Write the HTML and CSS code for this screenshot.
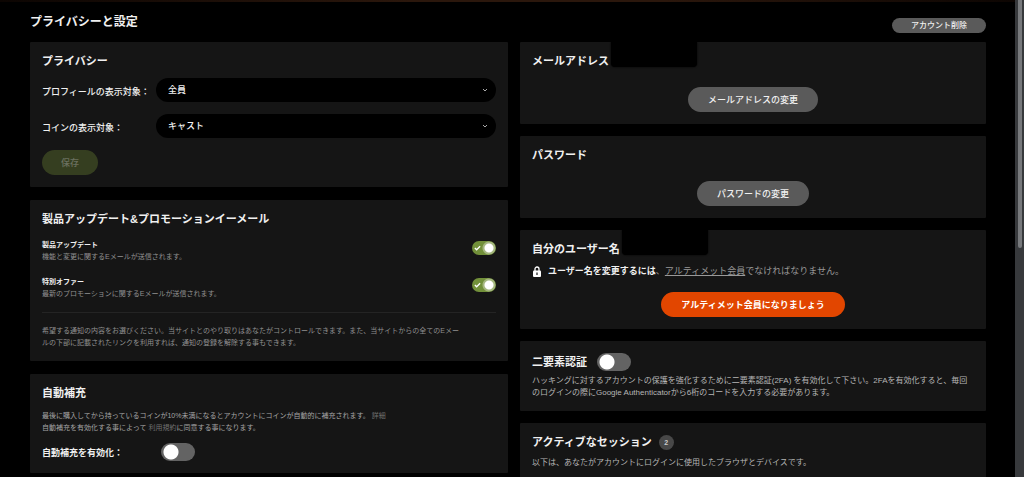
FILE: index.html
```html
<!DOCTYPE html>
<html lang="ja">
<head>
  <meta charset="utf-8">
  <meta name="viewport" content="width=device-width, initial-scale=1">
  <title>プライバシーと設定</title>
  <link rel="stylesheet" href="styles.css">
</head>
<body>
  <div class="page">
    <main class="settings">
      <header class="settings-header">
        <h1 class="page-title">プライバシーと設定</h1>
        <button type="button" class="button button-small">アカウント削除</button>
      </header>

      <div class="columns">
        <!-- Left column -->
        <div class="column column-left">
          <section class="panel">
            <h2 class="panel-title">プライバシー</h2>
            <form class="privacy-form">
              <div class="field">
                <label for="profile-visibility">プロフィールの表示対象：</label>
                <div class="select-wrap">
                  <select id="profile-visibility">
                    <option>全員</option>
                  </select>
                  <svg class="chevron" viewBox="0 0 6 4" fill="none" stroke="currentColor"><path d="M1 1l2 2 2-2"/></svg>
                </div>
              </div>
              <div class="field">
                <label for="coin-visibility">コインの表示対象：</label>
                <div class="select-wrap">
                  <select id="coin-visibility">
                    <option>キャスト</option>
                  </select>
                  <svg class="chevron" viewBox="0 0 6 4" fill="none" stroke="currentColor"><path d="M1 1l2 2 2-2"/></svg>
                </div>
              </div>
              <button type="submit" class="button button-save" disabled>保存</button>
            </form>
          </section>

          <section class="panel">
            <h2 class="panel-title">製品アップデート&amp;プロモーションイーメール</h2>
            <div class="options">
              <div class="option">
                <div class="option-text">
                  <label for="product-updates">製品アップデート</label>
                  <p>機能と変更に関するEメールが送信されます。</p>
                </div>
                <span class="switch-small">
                  <input type="checkbox" id="product-updates" checked>
                  <svg viewBox="0 0 8 6" fill="none" stroke="currentColor" stroke-width="1.5"><path d="M1 3l2 2 4-4"/></svg>
                </span>
              </div>
              <div class="option">
                <div class="option-text">
                  <label for="special-offers">特別オファー</label>
                  <p>最新のプロモーションに関するEメールが送信されます。</p>
                </div>
                <span class="switch-small">
                  <input type="checkbox" id="special-offers" checked>
                  <svg viewBox="0 0 8 6" fill="none" stroke="currentColor" stroke-width="1.5"><path d="M1 3l2 2 4-4"/></svg>
                </span>
              </div>
            </div>
            <p class="note">希望する通知の内容をお選びください。当サイトとのやり取りはあなたがコントロールできます。また、当サイトからの全てのEメー<br>ルの下部に記載されたリンクを利用すれば、通知の登録を解除する事もできます。</p>
          </section>

          <section class="panel">
            <h2 class="panel-title">自動補充</h2>
            <p class="refill-text">最後に購入してから持っているコインが10%未満になるとアカウントにコインが自動的に補充されます。 <a href="#">詳細</a><br>自動補充を有効化する事によって <a href="#">利用規約</a>に同意する事になります。</p>
            <div class="refill-row">
              <label for="auto-refill">自動補充を有効化：</label>
              <input type="checkbox" class="switch" id="auto-refill">
            </div>
          </section>
        </div>

        <!-- Right column -->
        <div class="column">
          <section class="panel">
            <h2 class="panel-title">メールアドレス<span class="hidden-value"></span></h2>
            <button type="button" class="button button-center">メールアドレスの変更</button>
          </section>

          <section class="panel">
            <h2 class="panel-title">パスワード</h2>
            <button type="button" class="button button-center">パスワードの変更</button>
          </section>

          <section class="panel">
            <h2 class="panel-title">自分のユーザー名<span class="hidden-value"></span></h2>
            <p class="username-text">
              <svg class="lock" viewBox="0 0 8 11"><path d="M2 5V3a2 2 0 0 1 4 0v2" fill="none" stroke="#fff" stroke-width="1.3"/><rect y="4.5" width="8" height="6.5" rx="1" fill="#fff"/><path d="M4 6.5v2.5" stroke="#151515" stroke-width="1.2"/></svg>
              <span><strong>ユーザー名を変更するには</strong>、<a href="#">アルティメット会員</a>でなければなりません。</span>
            </p>
            <button type="button" class="button button-center button-ultimate">アルティメット会員になりましょう</button>
          </section>

          <section class="panel">
            <div class="twofa-head">
              <h2 class="panel-title"><label for="two-factor">二要素認証</label></h2>
              <input type="checkbox" class="switch" id="two-factor">
            </div>
            <p class="text">ハッキングに対するアカウントの保護を強化するために二要素認証(2FA) を有効化して下さい。2FAを有効化すると、毎回<br>のログインの際にGoogle Authenticatorから6桁のコードを入力する必要があります。</p>
          </section>

          <section class="panel">
            <h2 class="panel-title sessions-title">アクティブなセッション <span class="badge">2</span></h2>
            <p class="text">以下は、あなたがアカウントにログインに使用したブラウザとデバイスです。</p>
          </section>
        </div>
      </div>
    </main>
    <div class="scrollbar"><div class="scrollbar-thumb"></div></div>
  </div>
</body>
</html>
```

FILE: styles.css
```css
* {
  margin: 0;
  padding: 0;
  box-sizing: border-box;
}

body {
  background: #000;
  color: #f0f0f0;
  font-family: "Liberation Sans", "Noto Sans CJK JP", sans-serif;
  font-size: 9px;
}

button,
select {
  font: inherit;
  color: inherit;
  border: none;
}

a {
  color: inherit;
}

.page {
  display: flex;
  height: 100vh;
  overflow: hidden;
  background: linear-gradient(to right, #0c0502, #2b170c 40%, #2b170c 65%, #0c0502) top / 100% 2px no-repeat;
}

.settings {
  flex: 1;
  padding: 15px 29px 12px 30px;
}

.settings-header {
  display: flex;
  justify-content: space-between;
  align-items: flex-end;
  min-height: 18px;
  margin-bottom: 9px;
}

.page-title {
  align-self: flex-start;
  font-size: 12px;
  line-height: 14px;
}

.columns {
  display: grid;
  grid-template-columns: 478fr 466fr;
  gap: 12px;
}

.column {
  display: flex;
  flex-direction: column;
  gap: 12px;
}

.column-left {
  gap: 13px;
}

.panel {
  position: relative;
  padding: 11px 12px 12px;
  background: #151515;
  border-radius: 1px;
}

.panel-title {
  font-size: 11px;
  line-height: 16px;
}

/* Buttons */
.button {
  height: 25px;
  padding: 0 20px;
  border-radius: 13px;
  background: #5a5a5a;
  font-weight: 500;
  white-space: nowrap;
}

.button-small {
  height: 15px;
  padding: 0 19px;
  font-size: 8px;
  line-height: 15px;
}

.button-center {
  display: block;
  margin: 18px auto 0;
}

.button-save {
  align-self: flex-start;
  padding: 0 19px;
  background: #353e20;
  color: #6b705f;
}

.button-ultimate {
  margin-top: 13px;
  background: #e24600;
  color: #fff;
  font-weight: 700;
}

/* Privacy form */
.privacy-form {
  display: flex;
  flex-direction: column;
  gap: 12px;
  margin-top: 9px;
}

.field {
  display: flex;
  align-items: flex-end;
}

.field label {
  width: 114px;
  line-height: 20px;
  font-weight: 500;
  white-space: nowrap;
}

.select-wrap {
  position: relative;
  flex: 1;
}

.select-wrap select {
  display: block;
  width: 100%;
  height: 24px;
  padding: 0 12px;
  border-radius: 12px;
  background: #000;
  font-weight: 500;
  appearance: none;
}

.chevron {
  position: absolute;
  top: 10px;
  right: 8px;
  width: 6px;
  height: 4px;
  color: #aaa;
  pointer-events: none;
}

/* Mail options */
.options {
  display: flex;
  flex-direction: column;
  gap: 13px;
  margin-top: 12px;
  padding-bottom: 12px;
  border-bottom: 1px solid #242424;
}

.option {
  display: flex;
  justify-content: space-between;
}

.option-text {
  font-size: 7px;
  line-height: 12px;
  color: #909090;
}

.option-text label {
  display: block;
  color: #f0f0f0;
  font-weight: 700;
}

.switch-small {
  position: relative;
  height: 14px;
  margin-top: 2px;
}

.switch-small input {
  display: block;
  width: 24px;
  height: 14px;
  border-radius: 7px;
  background: radial-gradient(circle at 17px 7px, #fff 4px, #a5b780 5px, #a5b780 6px, transparent 7px) #72903a;
  appearance: none;
}

.switch-small svg {
  position: absolute;
  top: 4px;
  left: 2px;
  width: 7px;
  height: 6px;
  color: #fff;
  pointer-events: none;
}

.note {
  padding-top: 12px;
  font-size: 7px;
  line-height: 12px;
  color: #909090;
}

/* Auto refill */
.refill-text {
  margin-top: 9px;
  font-size: 7px;
  line-height: 12px;
  color: #a5a5a5;
}

.refill-text a {
  color: #707070;
  text-decoration: none;
}

.refill-row {
  display: flex;
  align-items: center;
  margin-top: 9px;
}

.refill-row label {
  width: 119px;
  font-weight: 700;
}

.switch {
  width: 34px;
  height: 18px;
  border-radius: 9px;
  background: radial-gradient(circle at 10px 9px, #fff 7px, transparent 8px) #636363;
  appearance: none;
}

/* Right column */
.hidden-value {
  position: absolute;
  top: 0;
  width: 86px;
  height: 25px;
  margin-left: 2px;
  border-radius: 0 0 4px 4px;
  background: #000;
  box-shadow: 0 0 2px #000;
}

.username-text {
  display: flex;
  align-items: center;
  gap: 7px;
  margin-top: 6px;
  padding-left: 1px;
  line-height: 16px;
  color: #999;
}

.username-text strong {
  color: #f0f0f0;
}

.lock {
  width: 8px;
  height: 11px;
}

.twofa-head {
  display: flex;
  align-items: center;
  gap: 10px;
  height: 20px;
  margin-bottom: 3px;
}

.text {
  font-size: 8px;
  line-height: 12px;
  color: #b5b5b5;
}

.sessions-title {
  display: flex;
  align-items: center;
  gap: 7px;
  margin-bottom: 7px;
}

.badge {
  width: 15px;
  height: 15px;
  border-radius: 50%;
  background: #484848;
  color: #ccc;
  font-size: 7px;
  line-height: 15px;
  text-align: center;
}

/* Scrollbar */
.scrollbar {
  width: 9px;
  padding: 0 2px 0 3px;
  background: #37393c;
}

.scrollbar-thumb {
  height: 52%;
  border-radius: 0 0 2px 2px;
  background: #77797c;
}
```
